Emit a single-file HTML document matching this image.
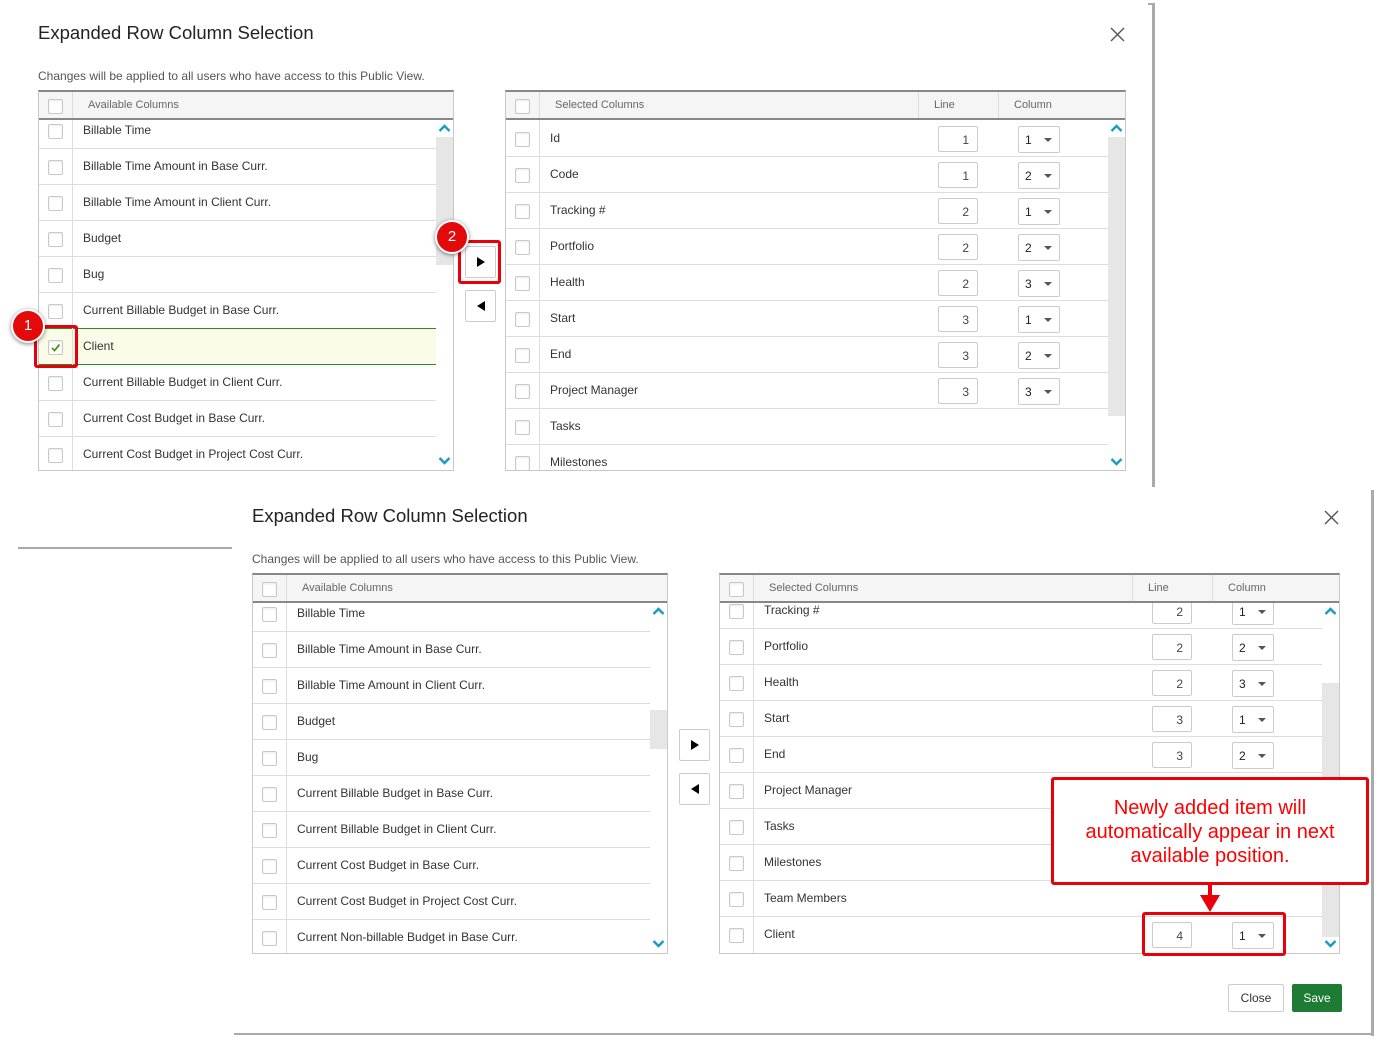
<!DOCTYPE html>
<html><head><meta charset="utf-8">
<style>
*{box-sizing:border-box;margin:0;padding:0}
body{width:1385px;height:1047px;background:#fff;position:relative;overflow:hidden;font-family:"Liberation Sans",Arial,sans-serif;color:#333}
.a{position:absolute}
.title{font-size:18.5px;color:#222;white-space:nowrap}
.sub{font-size:12px;color:#555;white-space:nowrap}
.tbl{position:absolute;border:1px solid #c8c8c8;border-top:2px solid #888;overflow:hidden;background:#fff}
.hd{position:absolute;left:0;top:0;right:0;height:28px;background:#f5f5f5;border-bottom:2px solid #888;z-index:3;font-size:11px;color:#666}
.hd span{position:absolute;top:7px}
.vl{position:absolute;top:0;bottom:0;width:1px;background:#ddd}
.row{position:absolute;left:0;height:36px;border-bottom:1px solid #ddd;font-size:12px;color:#333}
.row .t{position:absolute;top:10px;white-space:nowrap}
.cb{position:absolute;width:15px;height:15px;border:1px solid #c8c8c8;border-radius:2px;background:#fff;box-shadow:inset 0 1px 2px rgba(0,0,0,.08)}
.inp{position:absolute;width:40px;height:26px;border:1px solid #ccc;border-radius:2px;font-size:12px;text-align:right;padding:6px 8px 0 0;color:#444;background:#fff}
.sel{position:absolute;width:42px;height:27px;border:1px solid #ccc;border-radius:2px;font-size:12px;padding:6px 0 0 6px;color:#222;background:#fff}
.sel:after{content:"";position:absolute;right:7px;top:11px;border-left:4px solid transparent;border-right:4px solid transparent;border-top:4px solid #555}
.sb{position:absolute;top:29px;bottom:0;width:17px;background:#fff;z-index:2}
.th{position:absolute;left:0;width:17px;background:#e6e6e6}
.btn{position:absolute;width:31px;height:32px;border:1px solid #ccc;border-radius:2px;background:#fff}
.badge{position:absolute;width:34px;height:34px;border-radius:50%;background:#e20a0a;border:2px solid #fff;box-shadow:0 1px 4px rgba(0,0,0,.5);color:#fff;font-size:15px;text-align:center;line-height:30px;z-index:10}
.rb{position:absolute;border:3px solid #e8000b;border-radius:3px;z-index:9}
.line{position:absolute;background:#aaa}
</style></head><body>

<div class="line" style="left:1152px;top:3px;width:3px;height:484px"></div>
<div class="line" style="left:1148px;top:3px;width:6px;height:2px"></div>
<div class="line" style="left:18px;top:547px;width:214px;height:2px"></div>
<div class="line" style="left:1371px;top:490px;width:3px;height:546px"></div>
<div class="line" style="left:234px;top:1033px;width:1140px;height:2px"></div>

<div class="a title" style="left:38px;top:22px">Expanded Row Column Selection</div>
<svg class="a" style="left:1110px;top:27px" width="15" height="15"><path d="M1 1L14 14M14 1L1 14" stroke="#555" stroke-width="1.4"/></svg>
<div class="a sub" style="left:38px;top:69px">Changes will be applied to all users who have access to this Public View.</div>

<div class="tbl" style="left:38px;top:90px;width:416px;height:381px">
  <div class="hd"><div class="cb" style="left:9px;top:7px"></div><div class="vl" style="left:33px"></div><span style="left:49px">Available Columns</span></div>
  <div class="vl" style="left:33px;z-index:1"></div>
  <div class="row" style="top:21px;width:397px"><div class="cb" style="left:9px;top:11px"></div><span class="t" style="left:44px">Billable Time</span></div>
  <div class="row" style="top:57px;width:397px"><div class="cb" style="left:9px;top:11px"></div><span class="t" style="left:44px">Billable Time Amount in Base Curr.</span></div>
  <div class="row" style="top:93px;width:397px"><div class="cb" style="left:9px;top:11px"></div><span class="t" style="left:44px">Billable Time Amount in Client Curr.</span></div>
  <div class="row" style="top:129px;width:397px"><div class="cb" style="left:9px;top:11px"></div><span class="t" style="left:44px">Budget</span></div>
  <div class="row" style="top:165px;width:397px"><div class="cb" style="left:9px;top:11px"></div><span class="t" style="left:44px">Bug</span></div>
  <div class="row" style="top:201px;width:397px;border-bottom:1px solid #2a8a2a"><div class="cb" style="left:9px;top:11px"></div><span class="t" style="left:44px">Current Billable Budget in Base Curr.</span></div>
  <div class="row" style="top:237px;width:397px;background:#fbfbe9;border-bottom:1px solid #2a8a2a"><div class="cb" style="left:9px;top:11px"><svg width="13" height="13" style="position:absolute;left:0;top:0"><path d="M3 7L5.5 9.5L10.5 3.5" stroke="#4a9a1a" stroke-width="1.8" fill="none"/></svg></div><span class="t" style="left:44px">Client</span></div>
  <div class="row" style="top:273px;width:397px"><div class="cb" style="left:9px;top:11px"></div><span class="t" style="left:44px">Current Billable Budget in Client Curr.</span></div>
  <div class="row" style="top:309px;width:397px"><div class="cb" style="left:9px;top:11px"></div><span class="t" style="left:44px">Current Cost Budget in Base Curr.</span></div>
  <div class="row" style="top:345px;width:397px"><div class="cb" style="left:9px;top:11px"></div><span class="t" style="left:44px">Current Cost Budget in Project Cost Curr.</span></div>
  <div class="sb" style="left:397px"><div class="th" style="top:16px;height:128px"></div>
    <svg style="position:absolute;left:2px;top:2px" width="13" height="10"><path d="M1.5 8L6.5 3L11.5 8" stroke="#1a9bc4" stroke-width="2.4" fill="none"/></svg>
    <svg style="position:absolute;left:2px;top:335px" width="13" height="10"><path d="M1.5 2L6.5 7L11.5 2" stroke="#1a9bc4" stroke-width="2.4" fill="none"/></svg>
  </div>
</div>

<div class="btn" style="left:465px;top:246px"><svg width="29" height="30"><path d="M11 10L19 15L11 20Z" fill="#000"/></svg></div>
<div class="btn" style="left:465px;top:290px"><svg width="29" height="30"><path d="M19 10L11 15L19 20Z" fill="#000"/></svg></div>
<div class="rb" style="left:458px;top:240px;width:43px;height:44px"></div>
<div class="badge" style="left:435px;top:220px">2</div>
<div class="rb" style="left:34px;top:325px;width:44px;height:43px"></div>
<div class="badge" style="left:11px;top:309px">1</div>

<div class="tbl" style="left:505px;top:90px;width:621px;height:381px">
  <div class="hd"><div class="cb" style="left:9px;top:7px"></div><div class="vl" style="left:33px"></div><span style="left:49px">Selected Columns</span><div class="vl" style="left:412px"></div><span style="left:428px">Line</span><div class="vl" style="left:492px"></div><span style="left:508px">Column</span></div>
  <div class="vl" style="left:33px;z-index:1"></div>
  <div class="row" style="top:29px;width:602px"><div class="cb" style="left:9px;top:11px"></div><span class="t" style="left:44px">Id</span><div class="inp" style="left:432px;top:5px">1</div><div class="sel" style="left:512px;top:5px">1</div></div>
  <div class="row" style="top:65px;width:602px"><div class="cb" style="left:9px;top:11px"></div><span class="t" style="left:44px">Code</span><div class="inp" style="left:432px;top:5px">1</div><div class="sel" style="left:512px;top:5px">2</div></div>
  <div class="row" style="top:101px;width:602px"><div class="cb" style="left:9px;top:11px"></div><span class="t" style="left:44px">Tracking #</span><div class="inp" style="left:432px;top:5px">2</div><div class="sel" style="left:512px;top:5px">1</div></div>
  <div class="row" style="top:137px;width:602px"><div class="cb" style="left:9px;top:11px"></div><span class="t" style="left:44px">Portfolio</span><div class="inp" style="left:432px;top:5px">2</div><div class="sel" style="left:512px;top:5px">2</div></div>
  <div class="row" style="top:173px;width:602px"><div class="cb" style="left:9px;top:11px"></div><span class="t" style="left:44px">Health</span><div class="inp" style="left:432px;top:5px">2</div><div class="sel" style="left:512px;top:5px">3</div></div>
  <div class="row" style="top:209px;width:602px"><div class="cb" style="left:9px;top:11px"></div><span class="t" style="left:44px">Start</span><div class="inp" style="left:432px;top:5px">3</div><div class="sel" style="left:512px;top:5px">1</div></div>
  <div class="row" style="top:245px;width:602px"><div class="cb" style="left:9px;top:11px"></div><span class="t" style="left:44px">End</span><div class="inp" style="left:432px;top:5px">3</div><div class="sel" style="left:512px;top:5px">2</div></div>
  <div class="row" style="top:281px;width:602px"><div class="cb" style="left:9px;top:11px"></div><span class="t" style="left:44px">Project Manager</span><div class="inp" style="left:432px;top:5px">3</div><div class="sel" style="left:512px;top:5px">3</div></div>
  <div class="row" style="top:317px;width:602px"><div class="cb" style="left:9px;top:11px"></div><span class="t" style="left:44px">Tasks</span></div>
  <div class="row" style="top:353px;width:602px"><div class="cb" style="left:9px;top:11px"></div><span class="t" style="left:44px">Milestones</span></div>
  <div class="sb" style="left:602px"><div class="th" style="top:16px;height:279px"></div>
    <svg style="position:absolute;left:2px;top:2px" width="13" height="10"><path d="M1.5 8L6.5 3L11.5 8" stroke="#1a9bc4" stroke-width="2.4" fill="none"/></svg>
    <svg style="position:absolute;left:2px;top:336px" width="13" height="10"><path d="M1.5 2L6.5 7L11.5 2" stroke="#1a9bc4" stroke-width="2.4" fill="none"/></svg>
  </div>
</div>

<div class="a title" style="left:252px;top:505px">Expanded Row Column Selection</div>
<svg class="a" style="left:1324px;top:510px" width="15" height="15"><path d="M1 1L14 14M14 1L1 14" stroke="#555" stroke-width="1.4"/></svg>
<div class="a sub" style="left:252px;top:552px">Changes will be applied to all users who have access to this Public View.</div>

<div class="tbl" style="left:252px;top:573px;width:416px;height:381px">
  <div class="hd"><div class="cb" style="left:9px;top:7px"></div><div class="vl" style="left:33px"></div><span style="left:49px">Available Columns</span></div>
  <div class="vl" style="left:33px;z-index:1"></div>
  <div class="row" style="top:21px;width:397px"><div class="cb" style="left:9px;top:11px"></div><span class="t" style="left:44px">Billable Time</span></div>
  <div class="row" style="top:57px;width:397px"><div class="cb" style="left:9px;top:11px"></div><span class="t" style="left:44px">Billable Time Amount in Base Curr.</span></div>
  <div class="row" style="top:93px;width:397px"><div class="cb" style="left:9px;top:11px"></div><span class="t" style="left:44px">Billable Time Amount in Client Curr.</span></div>
  <div class="row" style="top:129px;width:397px"><div class="cb" style="left:9px;top:11px"></div><span class="t" style="left:44px">Budget</span></div>
  <div class="row" style="top:165px;width:397px"><div class="cb" style="left:9px;top:11px"></div><span class="t" style="left:44px">Bug</span></div>
  <div class="row" style="top:201px;width:397px"><div class="cb" style="left:9px;top:11px"></div><span class="t" style="left:44px">Current Billable Budget in Base Curr.</span></div>
  <div class="row" style="top:237px;width:397px"><div class="cb" style="left:9px;top:11px"></div><span class="t" style="left:44px">Current Billable Budget in Client Curr.</span></div>
  <div class="row" style="top:273px;width:397px"><div class="cb" style="left:9px;top:11px"></div><span class="t" style="left:44px">Current Cost Budget in Base Curr.</span></div>
  <div class="row" style="top:309px;width:397px"><div class="cb" style="left:9px;top:11px"></div><span class="t" style="left:44px">Current Cost Budget in Project Cost Curr.</span></div>
  <div class="row" style="top:345px;width:397px"><div class="cb" style="left:9px;top:11px"></div><span class="t" style="left:44px">Current Non-billable Budget in Base Curr.</span></div>
  <div class="sb" style="left:397px"><div class="th" style="top:106px;height:39px"></div>
    <svg style="position:absolute;left:2px;top:2px" width="13" height="10"><path d="M1.5 8L6.5 3L11.5 8" stroke="#1a9bc4" stroke-width="2.4" fill="none"/></svg>
    <svg style="position:absolute;left:2px;top:335px" width="13" height="10"><path d="M1.5 2L6.5 7L11.5 2" stroke="#1a9bc4" stroke-width="2.4" fill="none"/></svg>
  </div>
</div>

<div class="btn" style="left:679px;top:729px"><svg width="29" height="30"><path d="M11 10L19 15L11 20Z" fill="#000"/></svg></div>
<div class="btn" style="left:679px;top:773px"><svg width="29" height="30"><path d="M19 10L11 15L19 20Z" fill="#000"/></svg></div>

<div class="tbl" style="left:719px;top:573px;width:621px;height:381px">
  <div class="hd"><div class="cb" style="left:9px;top:7px"></div><div class="vl" style="left:33px"></div><span style="left:49px">Selected Columns</span><div class="vl" style="left:412px"></div><span style="left:428px">Line</span><div class="vl" style="left:492px"></div><span style="left:508px">Column</span></div>
  <div class="vl" style="left:33px;z-index:1"></div>
  <div class="row" style="top:18px;width:602px"><div class="cb" style="left:9px;top:11px"></div><span class="t" style="left:44px">Tracking #</span><div class="inp" style="left:432px;top:5px">2</div><div class="sel" style="left:512px;top:5px">1</div></div>
  <div class="row" style="top:54px;width:602px"><div class="cb" style="left:9px;top:11px"></div><span class="t" style="left:44px">Portfolio</span><div class="inp" style="left:432px;top:5px">2</div><div class="sel" style="left:512px;top:5px">2</div></div>
  <div class="row" style="top:90px;width:602px"><div class="cb" style="left:9px;top:11px"></div><span class="t" style="left:44px">Health</span><div class="inp" style="left:432px;top:5px">2</div><div class="sel" style="left:512px;top:5px">3</div></div>
  <div class="row" style="top:126px;width:602px"><div class="cb" style="left:9px;top:11px"></div><span class="t" style="left:44px">Start</span><div class="inp" style="left:432px;top:5px">3</div><div class="sel" style="left:512px;top:5px">1</div></div>
  <div class="row" style="top:162px;width:602px"><div class="cb" style="left:9px;top:11px"></div><span class="t" style="left:44px">End</span><div class="inp" style="left:432px;top:5px">3</div><div class="sel" style="left:512px;top:5px">2</div></div>
  <div class="row" style="top:198px;width:602px"><div class="cb" style="left:9px;top:11px"></div><span class="t" style="left:44px">Project Manager</span></div>
  <div class="row" style="top:234px;width:602px"><div class="cb" style="left:9px;top:11px"></div><span class="t" style="left:44px">Tasks</span></div>
  <div class="row" style="top:270px;width:602px"><div class="cb" style="left:9px;top:11px"></div><span class="t" style="left:44px">Milestones</span></div>
  <div class="row" style="top:306px;width:602px"><div class="cb" style="left:9px;top:11px"></div><span class="t" style="left:44px">Team Members</span></div>
  <div class="row" style="top:342px;width:602px;border-bottom:none"><div class="cb" style="left:9px;top:11px"></div><span class="t" style="left:44px">Client</span><div class="inp" style="left:432px;top:5px">4</div><div class="sel" style="left:512px;top:5px">1</div></div>
  <div class="sb" style="left:602px"><div class="th" style="top:79px;height:254px"></div>
    <svg style="position:absolute;left:2px;top:2px" width="13" height="10"><path d="M1.5 8L6.5 3L11.5 8" stroke="#1a9bc4" stroke-width="2.4" fill="none"/></svg>
    <svg style="position:absolute;left:2px;top:335px" width="13" height="10"><path d="M1.5 2L6.5 7L11.5 2" stroke="#1a9bc4" stroke-width="2.4" fill="none"/></svg>
  </div>
</div>

<div class="rb" style="left:1051px;top:777px;width:318px;height:108px;background:#fff;color:#f00;font-family:'Liberation Sans',Arial,sans-serif;font-size:20px;line-height:24px;text-align:center;padding-top:16px">Newly added item will<br>automatically appear in next<br>available position.</div>
<div class="a" style="left:1208px;top:884px;width:4px;height:14px;background:#e8000b;z-index:9"></div>
<svg class="a" style="left:1200px;top:895px;z-index:9" width="20" height="18"><path d="M0 0L20 0L10 17Z" fill="#e8000b"/></svg>
<div class="rb" style="left:1142px;top:912px;width:144px;height:44px"></div>

<div class="a" style="left:1228px;top:984px;width:56px;height:28px;border:1px solid #ccc;border-radius:2px;font-size:12px;text-align:center;line-height:26px;color:#333">Close</div>
<div class="a" style="left:1292px;top:984px;width:50px;height:28px;background:#1e7b34;border-radius:2px;font-size:12px;text-align:center;line-height:28px;color:#fff">Save</div>
</body></html>
